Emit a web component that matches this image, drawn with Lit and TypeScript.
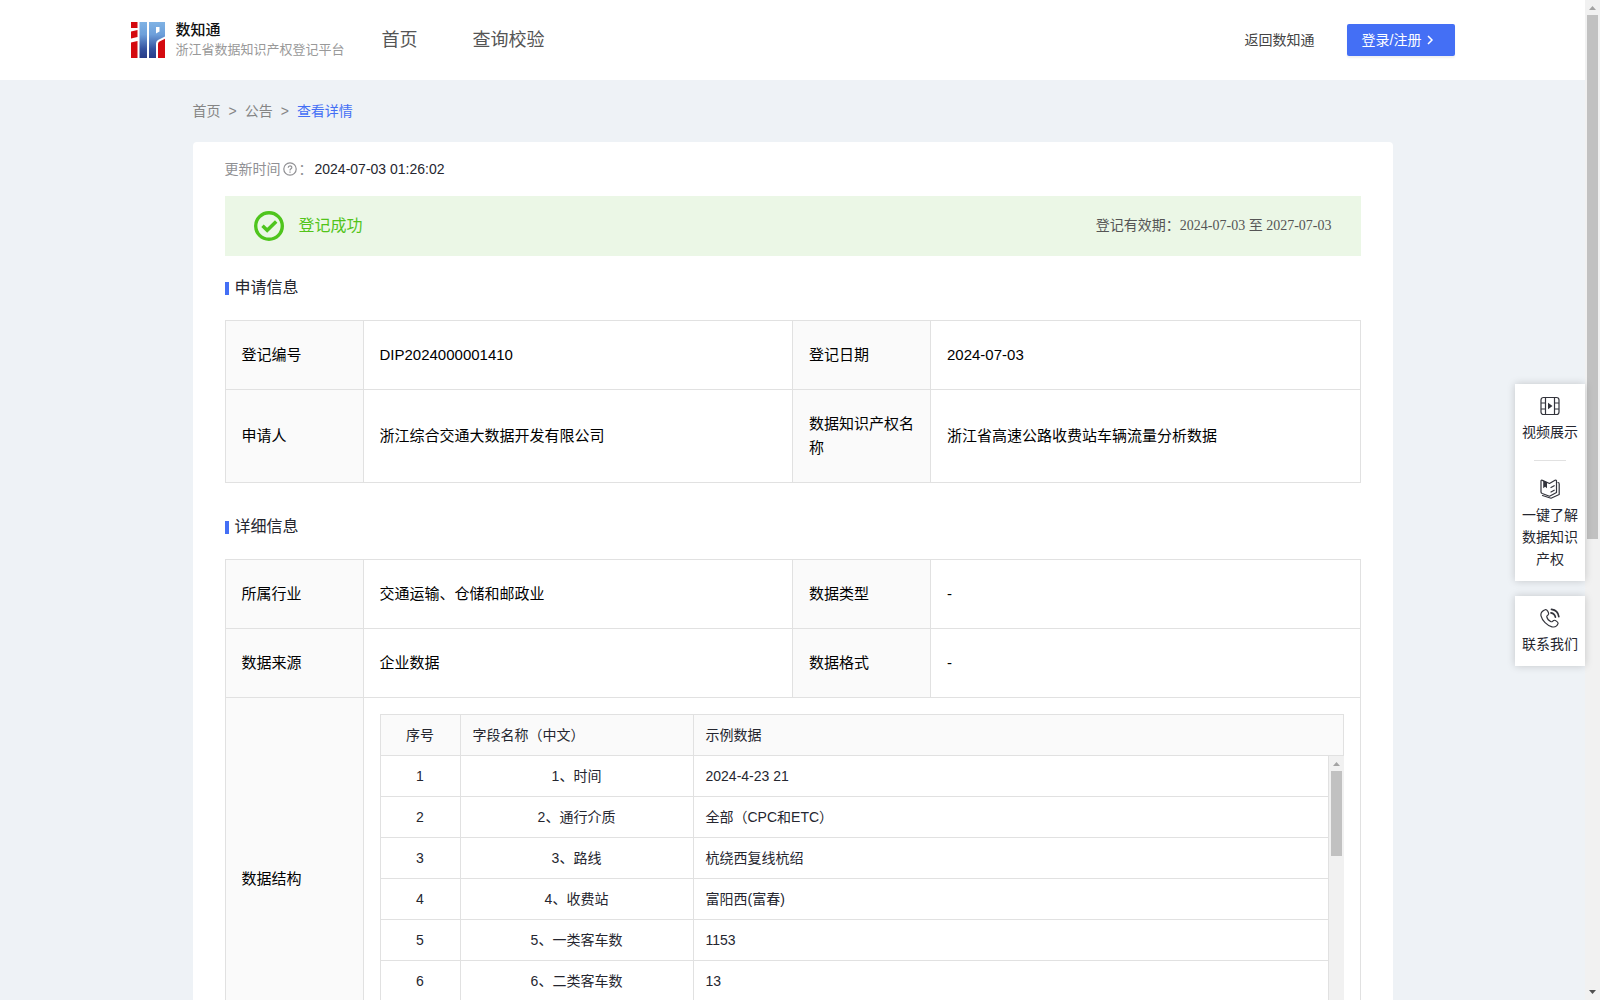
import { LitElement, html, css, svg } from "lit";
import { customElement, property } from "lit/decorators.js";

type Cell = { label: string; value: string };

const APPLICATION: Cell[][] = [
  [
    { label: "登记编号", value: "DIP2024000001410" },
    { label: "登记日期", value: "2024-07-03" },
  ],
  [
    { label: "申请人", value: "浙江综合交通大数据开发有限公司" },
    { label: "数据知识产权名称", value: "浙江省高速公路收费站车辆流量分析数据" },
  ],
];

const DETAILS: Cell[][] = [
  [
    { label: "所属行业", value: "交通运输、仓储和邮政业" },
    { label: "数据类型", value: "-" },
  ],
  [
    { label: "数据来源", value: "企业数据" },
    { label: "数据格式", value: "-" },
  ],
];

const FIELDS: [string, string][] = [
  ["1、时间", "2024-4-23 21"],
  ["2、通行介质", "全部（CPC和ETC）"],
  ["3、路线", "杭绕西复线杭绍"],
  ["4、收费站", "富阳西(富春)"],
  ["5、一类客车数", "1153"],
  ["6、二类客车数", "13"],
];

const ICONS = {
  video: svg`
    <rect x="1" y="1.500" width="18" height="17" rx="2.500" />
    <path d="M5.500 2v16M14.500 2v16M1.500 7h4M1.500 13h4M14.500 7h4M14.500 13h4" />
    <path d="M8 6.800l4.500 3.200L8 13.200z" fill="currentColor" stroke="none" />`,
  book: svg`
    <path d="M1 2.200Q1 .8 2.400 1.400L9.500 4.500L15 1.300Q16.500 .6 16.500 2.200V13.500L9.500 17.200L2.200 14.500Q1 14 1 13z" />
    <path d="M18 3.500Q19.200 3.600 19.200 5V15.500L11 19.200L2.500 16.500" />
    <path d="M3.200 1.500V9.200l1.900-1.500 1.900 1.500V3.200z" fill="currentColor" stroke="none" />
    <path d="M11 8.500l3.200-1.800M11 13l3.200-1.800" />`,
  phone: svg`
    <path d="M5 1.800C7 .8 9 4.800 8.500 6.200C8 7.500 6.500 7.500 6.800 8.900C7.300 11 9.200 13 11 13.700C12.400 14.200 12.800 12.500 14 12.300C15.400 12 18.500 14.300 18 15.600C17 18.200 14.500 19.400 12 18.800C7 17.600 2.200 12.500 1 7.800C.5 5.300 2.500 2.900 5 1.800z" />
    <path d="M11 4.800q3.800.6 4.400 4.400M11.500 1.300q6.500.8 7.300 7.300" stroke-width="1.700" />`,
};

/** Decorative classic scrollbar track with arrows and a thumb. */
@customElement("scroll-track")
export class ScrollTrack extends LitElement {
  @property({ type: Number }) share = 50;

  static styles = css`
    :host {
      display: flex;
      flex-direction: column;
      flex: none;
      width: 15px;
      background: #f1f1f1;
    }
    .arrow {
      display: block;
      flex: none;
      width: 15px;
      height: 15px;
    }
    .lane {
      flex: 1;
      padding: 0 2px;
    }
    .thumb {
      background: #c1c1c1;
    }
  `;

  render() {
    return html`
      <svg class="arrow" viewBox="0 0 15 15" aria-hidden="true">
        <path d="M4 10h7L7.500 6z" fill="#a3a3a3" />
      </svg>
      <div class="lane">
        <div class="thumb" style="height:${this.share}%"></div>
      </div>
      <svg class="arrow" viewBox="0 0 15 15" aria-hidden="true">
        <path d="M4 5h7L7.500 9z" fill="#505050" />
      </svg>
    `;
  }
}

@customElement("app-root")
export class AppRoot extends LitElement {
  static styles = css`
    :host {
      display: flex;
      height: 100vh;
      position: relative;
      background: #eef2f6;
      color: #25262f;
      font-family: "Liberation Sans", "Noto Sans CJK SC", sans-serif;
      font-size: 14px;
      line-height: 22px;
    }
    * {
      box-sizing: border-box;
    }
    a {
      color: inherit;
      text-decoration: none;
    }
    button {
      font: inherit;
      color: inherit;
      border: 0;
      background: none;
      padding: 0;
      cursor: pointer;
    }
    svg {
      display: block;
      flex: none;
    }
    .page {
      flex: 1;
      min-width: 0;
      overflow-y: auto;
      scrollbar-width: none;
    }

    /* Header */
    .header {
      background: #fff;
    }
    .header-inner {
      display: flex;
      align-items: center;
      max-width: 1324px;
      height: 80px;
      margin: 0 auto;
    }
    .brand {
      display: flex;
      align-items: center;
      gap: 11px;
      width: 214px;
      white-space: nowrap;
    }
    .brand-text {
      display: flex;
      flex-direction: column;
      line-height: 20px;
    }
    .brand-name {
      font-size: 15px;
      font-weight: 500;
      color: #111;
    }
    .brand-sub {
      font-size: 13px;
      color: #999;
    }
    .nav {
      display: flex;
      gap: 55px;
      margin-left: 37px;
      font-size: 18px;
      color: #555;
    }
    .account {
      display: flex;
      align-items: center;
      gap: 32px;
      margin-left: auto;
      color: #444;
    }
    .login {
      display: flex;
      align-items: center;
      gap: 2px;
      height: 32px;
      width: 108px;
      padding-left: 15px;
      border-radius: 2px;
      background: #446ff5;
      color: #fff;
      box-shadow: 0 2px 2px rgba(0, 0, 0, 0.06);
    }

    /* Body */
    .container {
      max-width: 1200px;
      margin: 0 auto;
    }
    .crumbs {
      display: flex;
      gap: 8px;
      padding: 20px 0;
      color: #858585;
    }
    .crumb-current {
      color: #446ff5;
    }
    .card {
      padding: 16px 32px 32px;
      border-radius: 4px;
      background: #fff;
    }
    .updated {
      display: flex;
      align-items: center;
      color: #909094;
    }
    .updated-time {
      color: #25262f;
      margin-left: 2px;
    }
    .banner {
      display: flex;
      align-items: center;
      height: 60px;
      margin-top: 16px;
      padding: 0 29px;
      background: #ebf7e6;
    }
    .banner-state {
      margin-left: 15px;
      font-size: 16px;
      color: #52c41a;
    }
    .banner-period {
      margin-left: auto;
      font-family: "Liberation Serif", "Noto Sans CJK SC", serif;
      color: #555;
    }
    .section-title {
      display: flex;
      align-items: center;
      gap: 6px;
      height: 24px;
      margin: 20px 0;
      font-size: 16px;
      font-weight: 400;
    }
    .section-title::before {
      content: "";
      width: 4px;
      height: 13px;
      background: #446ff5;
    }
    .section-second {
      margin-top: 32px;
    }

    .info {
      width: 100%;
      table-layout: fixed;
      border-collapse: collapse;
      font-size: 15px;
      line-height: 24px;
      color: #000;
    }
    .col-label {
      width: 138px;
    }
    .info-label,
    .info-value {
      padding: 22px 16px;
      border: 1px solid #e1e1e1;
      text-align: left;
      font-weight: 400;
    }
    .info-label {
      background: #fafafa;
    }
    .info-nested {
      padding: 16px;
      border: 1px solid #e1e1e1;
    }

    .fields {
      flex: 1;
      width: 100%;
      table-layout: fixed;
      border-spacing: 0;
      border-left: 1px solid #e1e1e1;
      font-size: 14px;
      line-height: 22px;
      color: #25262f;
    }
    .fields-head {
      border-top: 1px solid #e1e1e1;
    }
    .col-index {
      width: 80px;
    }
    .col-name {
      width: 233px;
    }
    .field {
      height: 41px;
      padding: 0 12px;
      border: 0 solid #e1e1e1;
      border-width: 0 1px 1px 0;
      text-align: left;
      font-weight: 400;
    }
    .field-head {
      background: #fafafa;
    }
    .centered {
      text-align: center;
    }
    .fields-body {
      display: flex;
      align-items: stretch;
      height: 287px;
    }
    .fields-view {
      flex: 1;
      min-width: 0;
      overflow-y: auto;
      scrollbar-width: none;
    }

    /* Floating shortcuts over the page */
    .shortcuts {
      position: absolute;
      top: 384px;
      right: 15px;
      width: 70px;
      display: flex;
      flex-direction: column;
      gap: 15px;
    }
    .shortcut-group {
      display: flex;
      flex-direction: column;
      align-items: center;
      padding: 12px 6px 11px;
      background: #fff;
      box-shadow: 0 0 8px rgba(0, 0, 0, 0.18);
    }
    .shortcut {
      display: flex;
      flex-direction: column;
      align-items: center;
      gap: 5px;
      text-align: center;
    }
    .shortcut-icon {
      color: #33343c;
    }
    .divider {
      width: 32px;
      height: 1px;
      margin: 17px 0 18px;
      background: #e1e1e1;
    }
  `;

  private shortcut(icon: unknown, text: string) {
    return html`
      <button class="shortcut" type="button">
        <svg
          class="shortcut-icon"
          width="20"
          height="20"
          viewBox="0 0 20 20"
          fill="none"
          stroke="currentColor"
          stroke-width="1.2"
          stroke-linejoin="round"
          stroke-linecap="round"
          aria-hidden="true"
        >
          ${icon}
        </svg>
        <span>${text}</span>
      </button>
    `;
  }

  private infoRows(rows: Cell[][]) {
    return rows.map(
      (row) => html`
        <tr>
          ${row.map(
            (cell) => html`
              <th class="info-label" scope="row">${cell.label}</th>
              <td class="info-value">${cell.value}</td>
            `
          )}
        </tr>
      `
    );
  }

  private infoCols() {
    return html`
      <colgroup>
        <col class="col-label" />
        <col />
        <col class="col-label" />
        <col />
      </colgroup>
    `;
  }

  private fieldCols() {
    return html`
      <colgroup>
        <col class="col-index" />
        <col class="col-name" />
        <col />
      </colgroup>
    `;
  }

  private header() {
    return html`
      <header class="header">
        <div class="header-inner">
          <a class="brand" href="#">
            <svg width="34" height="36" viewBox="0 0 34 36" aria-hidden="true">
              <defs>
                <linearGradient id="blue" gradientUnits="userSpaceOnUse" x1="0" y1="0" x2="0" y2="36">
                  <stop offset="0" stop-color="#7fb2e4" />
                  <stop offset="0.35" stop-color="#6d9fda" />
                  <stop offset="0.75" stop-color="#35529f" />
                  <stop offset="1" stop-color="#283c88" />
                </linearGradient>
              </defs>
              <path d="M0 0h6.500v6H0zM0 9.500L6.500 8V15L0 16.500zM0 20.500L6.500 19V36H0z" fill="#d40a10" />
              <path d="M8.500 0h7.500v36H8.500z" fill="url(#blue)" />
              <path
                d="M18 0H34V14.500L27 18Q25 19 25 21.500V36H18zM25 5V11.500L28.500 9.500V5z"
                fill="url(#blue)"
                fill-rule="evenodd"
              />
              <path d="M27 22Q27 20.200 28.500 19.500L34 16.800V36H27z" fill="#d40a10" />
            </svg>
            <span class="brand-text">
              <span class="brand-name">数知通</span>
              <span class="brand-sub">浙江省数据知识产权登记平台</span>
            </span>
          </a>
          <nav class="nav">
            <a href="#">首页</a>
            <a href="#">查询校验</a>
          </nav>
          <div class="account">
            <a href="#">返回数知通</a>
            <button class="login" type="button">
              <span>登录/注册</span>
              <svg
                width="14"
                height="14"
                viewBox="0 0 14 14"
                fill="none"
                stroke="#fff"
                stroke-width="1.5"
                aria-hidden="true"
              >
                <path d="M5 3l4 4-4 4" />
              </svg>
            </button>
          </div>
        </div>
      </header>
    `;
  }

  private fieldTable() {
    return html`
      <table class="fields fields-head">
        ${this.fieldCols()}
        <thead>
          <tr>
            <th class="field field-head centered" scope="col">序号</th>
            <th class="field field-head" scope="col">字段名称（中文）</th>
            <th class="field field-head" scope="col">示例数据</th>
          </tr>
        </thead>
      </table>
      <div class="fields-body">
        <div class="fields-view">
          <table class="fields">
            ${this.fieldCols()}
            <tbody>
              ${FIELDS.map(
                ([name, sample], i) => html`
                  <tr>
                    <td class="field centered">${i + 1}</td>
                    <td class="field centered">${name}</td>
                    <td class="field">${sample}</td>
                  </tr>
                `
              )}
            </tbody>
          </table>
        </div>
        <scroll-track share="33"></scroll-track>
      </div>
    `;
  }

  render() {
    return html`
      <div class="page">
        ${this.header()}
        <main class="container">
          <nav class="crumbs">
            <a href="#">首页</a>
            <span>&gt;</span>
            <a href="#">公告</a>
            <span>&gt;</span>
            <a class="crumb-current" href="#">查看详情</a>
          </nav>
          <section class="card">
            <div class="updated">
              <span>更新时间</span>
              <button type="button" aria-label="说明">
                <svg
                  width="18"
                  height="14"
                  viewBox="-2 0 18 14"
                  fill="none"
                  stroke="#909094"
                  stroke-width="1.2"
                  aria-hidden="true"
                >
                  <circle cx="7" cy="7" r="6.200" />
                  <path d="M5.200 5.800C5.200 3.200 8.900 3.300 8.800 5.400C8.800 6.800 7 6.700 7 8.400M7 9.400v1.300" />
                </svg>
              </button>
              <span>：</span>
              <time class="updated-time">2024-07-03 01:26:02</time>
            </div>
            <div class="banner">
              <svg
                width="30"
                height="30"
                viewBox="0 0 30 30"
                fill="none"
                stroke="#4fc51d"
                aria-hidden="true"
              >
                <circle cx="15" cy="15" r="13.300" stroke-width="3.400" />
                <path d="M8.500 14.700l4.700 4.500 9-8.700" stroke-width="3.500" />
              </svg>
              <span class="banner-state">登记成功</span>
              <span class="banner-period">登记有效期：2024-07-03 至 2027-07-03</span>
            </div>
            <h2 class="section-title">申请信息</h2>
            <table class="info">
              ${this.infoCols()}
              <tbody>
                ${this.infoRows(APPLICATION)}
              </tbody>
            </table>
            <h2 class="section-title section-second">详细信息</h2>
            <table class="info">
              ${this.infoCols()}
              <tbody>
                ${this.infoRows(DETAILS)}
                <tr>
                  <th class="info-label" scope="row">数据结构</th>
                  <td class="info-nested" colspan="3">${this.fieldTable()}</td>
                </tr>
              </tbody>
            </table>
          </section>
        </main>
      </div>
      <scroll-track share="54"></scroll-track>
      <aside class="shortcuts">
        <div class="shortcut-group">
          ${this.shortcut(ICONS.video, "视频展示")}
          <div class="divider"></div>
          ${this.shortcut(ICONS.book, "一键了解数据知识产权")}
        </div>
        <div class="shortcut-group">${this.shortcut(ICONS.phone, "联系我们")}</div>
      </aside>
    `;
  }
}
